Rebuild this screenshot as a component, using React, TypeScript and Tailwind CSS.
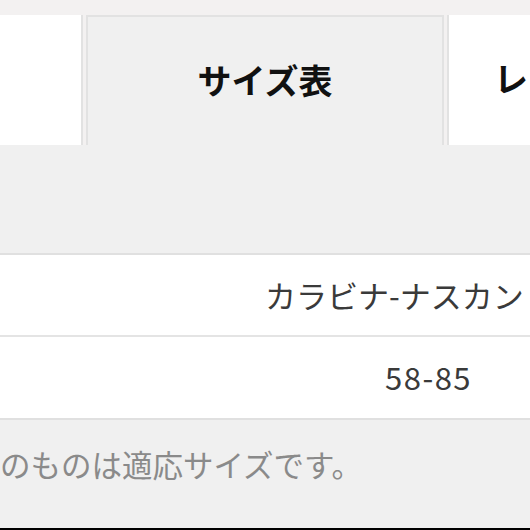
import React from 'react';

const font = { fontFamily: '"Noto Sans CJK JP", "Noto Sans", sans-serif' };

export default function App() {
  return (
    <div
      className="flex h-[530px] w-[530px] flex-col overflow-hidden bg-[#f0f0f0]"
      style={font}
    >
      {/* tabs */}
      <div className="flex h-[145px] shrink-0 gap-[3px] bg-[#f3f1f1] pt-[15px]">
        <div className="w-[83px] shrink-0 border-r-2 border-[#e2e2e2] bg-white" />
        <div className="flex w-[358px] shrink-0 justify-center border-x-2 border-t-2 border-[#e2e2e2] bg-[#f0f0f0] pt-[46px]">
          <span className="text-[34px] leading-none font-bold text-[#111]">サイズ表</span>
        </div>
        <div className="flex min-w-0 flex-1 overflow-hidden border-l-2 border-[#e2e2e2] bg-white pl-[45px] pt-[46px]">
          <span className="text-[34px] leading-none font-bold whitespace-nowrap text-[#111]">レ</span>
        </div>
      </div>

      {/* table */}
      <div className="mt-[108px] shrink-0 border-t-2 border-[#e0e0e0] bg-white">
        <div className="flex h-[82px] items-center border-b-2 border-[#e4e4e4] pl-[265px]">
          <span className="text-[31px] whitespace-nowrap text-[#3a3a3a]">カラビナ-ナスカン</span>
        </div>
        <div className="flex h-[83px] items-center border-b-2 border-[#e0e0e0] pl-[385px]">
          <span className="text-[31px] tracking-[1.5px] text-[#3a3a3a]">58-85</span>
        </div>
      </div>

      <div className="flex flex-1 flex-col">
        <div className="pt-[29px] text-[30.5px] leading-none whitespace-nowrap text-[#8a8a8a]">
          のものは適応サイズです。
        </div>
        <div className="mt-auto h-[2px] bg-black" />
      </div>
    </div>
  );
}
